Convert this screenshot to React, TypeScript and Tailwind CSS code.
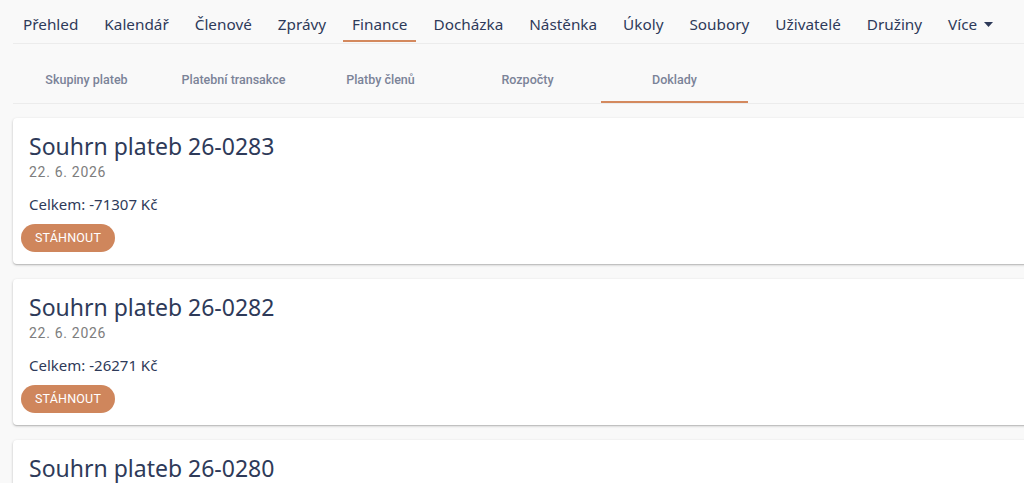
import React from "react";

const navItems = [
  "Přehled",
  "Kalendář",
  "Členové",
  "Zprávy",
  "Finance",
  "Docházka",
  "Nástěnka",
  "Úkoly",
  "Soubory",
  "Uživatelé",
  "Družiny",
];

const subTabs = ["Skupiny plateb", "Platební transakce", "Platby členů", "Rozpočty", "Doklady"];

const documents = [
  { no: "26-0283", date: "22. 6. 2026", total: "-71307 Kč" },
  { no: "26-0282", date: "22. 6. 2026", total: "-26271 Kč" },
  { no: "26-0280", date: "22. 6. 2026", total: "-18450 Kč" },
];

const brand = { fontFamily: "'Noto Sans', 'Open Sans', sans-serif" };
const roboto = { fontFamily: "Roboto, 'Noto Sans', sans-serif" };

function TopNav() {
  return (
    <nav className="flex h-[44px] border-b border-[#ececec] pl-[1px]" style={brand}>
      <div className="flex gap-[8px]">
        {navItems.map((item) => {
          const active = item === "Finance";
          return (
            <div key={item} className="relative px-[9px] pt-[12px]">
              <span className="text-[15.3px] leading-6 text-[#2e3a59]">{item}</span>
              {active && (
                <span className="absolute bottom-[1px] left-0 right-0 h-[2px] bg-[#d4895e]" />
              )}
            </div>
          );
        })}
        <div className="flex h-[36px] items-center gap-[7px] px-[9px] pt-[12px]">
          <span className="text-[15.3px] leading-6 text-[#2e3a59]">Více</span>
          <svg width="9" height="5" viewBox="0 0 9 5">
            <path d="M0 0 L9 0 L4.5 5 Z" fill="#2e3a59" />
          </svg>
        </div>
      </div>
    </nav>
  );
}

function SubTabs() {
  return (
    <div className="flex h-[60px] items-end border-b border-[#ececec]" style={roboto}>
      {subTabs.map((tab) => {
        const active = tab === "Doklady";
        return (
          <div
            key={tab}
            className="relative flex h-[48px] w-[147px] items-center justify-center pt-[3px]"
          >
            <span className="text-[12.5px] font-medium text-[#7b8398]">{tab}</span>
            {active && <span className="absolute bottom-0 left-0 right-0 h-[2px] bg-[#d4895e]" />}
          </div>
        );
      })}
    </div>
  );
}

function DocumentCard({ no, date, total }: { no: string; date: string; total: string }) {
  return (
    <div className="rounded-[4px] bg-white px-4 pb-3 pt-[12px] shadow-[0_1px_3px_rgba(0,0,0,0.2),0_1px_1px_rgba(0,0,0,0.12)]">
      <h2 className="text-[23px] leading-8 text-[#2e3a59]" style={brand}>
        Souhrn plateb {no}
      </h2>
      <div className="text-[14px] leading-5 tracking-[0.7px] text-[#7d7d7d]" style={roboto}>
        {date}
      </div>
      <div className="mt-[10px] text-[15px] leading-6 text-[#2e3a59]" style={brand}>
        Celkem: {total}
      </div>
      <button
        className="-ml-2 mt-2 flex h-[28px] w-[94px] items-center justify-center rounded-full bg-[#cf865c] text-[12.5px] uppercase tracking-[0.2px] text-white"
        style={roboto}
      >
        Stáhnout
      </button>
    </div>
  );
}

export default function App() {
  return (
    <div className="h-[483px] w-full overflow-hidden bg-[#f9f9f9]">
      <div className="ml-[13px] w-[1060px]">
        <TopNav />
        <SubTabs />
        <div className="mt-[14px] flex flex-col gap-[15px]">
          {documents.map((d) => (
            <DocumentCard key={d.no} {...d} />
          ))}
        </div>
      </div>
    </div>
  );
}
